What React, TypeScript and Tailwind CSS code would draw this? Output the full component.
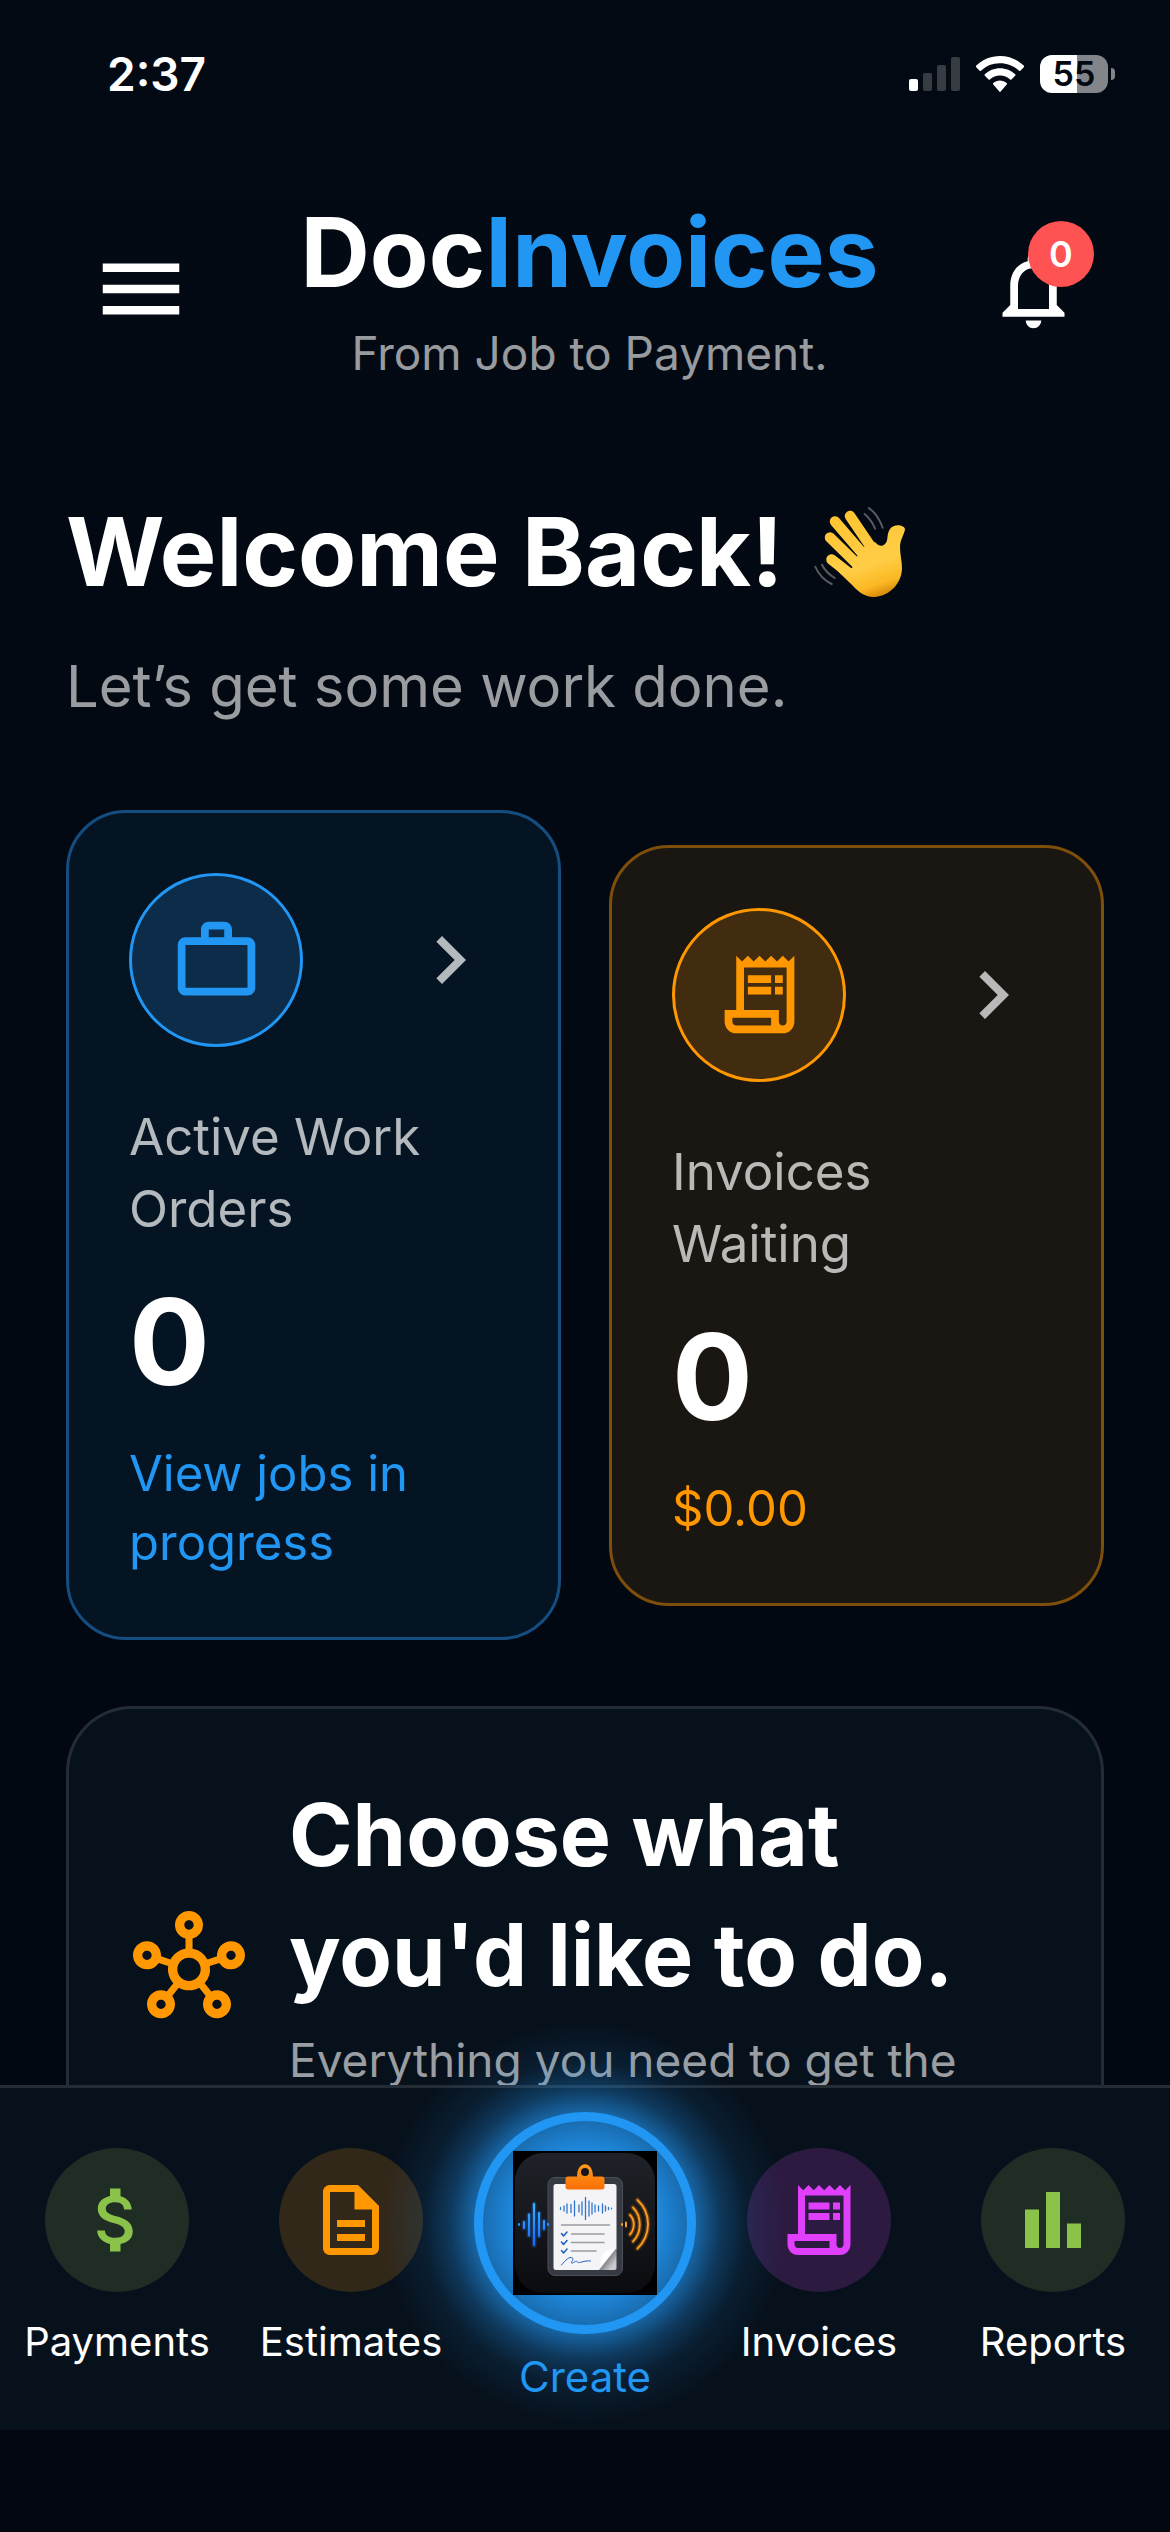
import type { ReactNode } from "react";
import {
  MdBarChart,
  MdAttachMoney,
  MdChevronRight,
  MdMenu,
  MdNotificationsNone,
  MdOutlineDescription,
  MdOutlineHub,
  MdOutlineReceiptLong,
  MdWorkOutline,
} from "react-icons/md";

interface StatCardProps {
  icon: ReactNode;
  label: string;
  count: number;
  detail: string;
  cardClass: string;
  iconClass: string;
  detailClass: string;
}

interface NavItemProps {
  icon: ReactNode;
  label: string;
  iconClass: string;
}

function StatusBar() {
  return (
    <div className="flex items-center justify-between pl-[107px] pr-[55px] pt-[54px]">
      <span className="text-[46px] font-semibold leading-10">2:37</span>
      <div className="flex items-center gap-4">
        <svg className="h-9 w-[51px]" viewBox="0 0 51 36" aria-hidden="true">
          <rect x="0" y="23" width="9" height="12" rx="2" fill="#fff" />
          <rect x="14" y="17" width="9" height="18" rx="2" fill="#373b42" />
          <rect x="28" y="9" width="9" height="26" rx="2" fill="#373b42" />
          <rect x="42" y="1" width="9" height="34" rx="2" fill="#373b42" />
        </svg>
        <svg className="h-9 w-12" viewBox="0 0 48 36" fill="#fff" aria-hidden="true">
          <path d="M24 0C14.700 0 6.200 3.700 0 9.800a1 1 0 0 0 0 1.300l3.600 3.600a1 1 0 0 0 1.300 0A27.500 27.500 0 0 1 24 7.300c7.400 0 14.100 2.800 19.100 7.400a1 1 0 0 0 1.300 0L48 11.100a1 1 0 0 0 0-1.300C41.800 3.700 33.300 0 24 0Z" />
          <path d="M24 12.300c-5.900 0-11.200 2.300-15.200 6a1 1 0 0 0 0 1.400l3.800 3.700a1 1 0 0 0 1.300 0 14.800 14.800 0 0 1 20.200 0 1 1 0 0 0 1.300 0l3.800-3.700a1 1 0 0 0 0-1.400c-4-3.700-9.300-6-15.200-6Z" />
          <path d="M24 24.600c-2.600 0-4.900.9-6.700 2.500a1 1 0 0 0 0 1.400l6 7.100a1 1 0 0 0 1.400 0l6-7.100a1 1 0 0 0 0-1.400 10 10 0 0 0-6.700-2.500Z" />
        </svg>
        <div className="flex items-center gap-[3px]">
          <div className="flex h-[38px] w-[68px] items-center justify-center rounded-xl bg-linear-to-r from-white from-54% to-[#828589] to-54% text-[34px] font-semibold leading-none text-[#030912]">
            55
          </div>
          <div className="h-3 w-1 rounded-r-full bg-[#828589]" />
        </div>
      </div>
    </div>
  );
}

function WavingHand() {
  return (
    <svg className="size-[98px]" viewBox="8 8 98 98" role="img" aria-label="Waving hand">
      <defs>
        <linearGradient id="hand" gradientUnits="userSpaceOnUse" x1="50" y1="20" x2="78" y2="102">
          <stop offset="0" stopColor="#ffc533" />
          <stop offset="0.6" stopColor="#ffcd46" />
          <stop offset="0.85" stopColor="#fbb823" />
          <stop offset="1" stopColor="#d48407" />
        </linearGradient>
      </defs>
      <g stroke="url(#hand)" strokeWidth="10.500" strokeLinecap="round" fill="none">
        <path d="M47 21L68 52" />
        <path d="M32 26.500L60 59" />
        <path d="M27 42.500L54 69" />
        <path d="M28.500 64.500L56 86" />
      </g>
      <path
        d="M62 51L72 47C75 51 79 52 82 49C86 45 83 40 87 34C91 28 102 30 102 34.500C101 40 97 45 97 52C97 60 99 66 99 73C99 87 88 101 71 102C60 102 54 95 47 88L33 74.500L49 73L54 61.500Z"
        fill="url(#hand)"
      />
      <g stroke="#5b5c60" strokeWidth="2" fill="none">
        <path d="M65 12.500C72 17 77 25 80 33.500M61 18.500c5 4 9 9.500 11.500 16" />
        <path d="M12 71c3 7.500 9 14.500 17.500 18.500M18.500 69c3 6 8 11 14 14.500" />
      </g>
    </svg>
  );
}

function StatCard({ icon, label, count, detail, cardClass, iconClass, detailClass }: StatCardProps) {
  return (
    <a href="#" className={`flex-1 rounded-[60px] border-[3px] p-[60px] ${cardClass}`}>
      <div className="flex items-center justify-between">
        <div className={`flex size-[174px] items-center justify-center rounded-full border-[3px] ${iconClass}`}>
          {icon}
        </div>
        <MdChevronRight className="size-24 text-white/70" />
      </div>
      <div className="mt-[54px] text-[51px] leading-[72px] text-white/70">{label}</div>
      <div className="my-[37px] text-[120px] font-bold leading-[120px]">{count}</div>
      <div className={`text-[49px] leading-[69px] ${detailClass}`}>{detail}</div>
    </a>
  );
}

function NavItem({ icon, label, iconClass }: NavItemProps) {
  return (
    <a href="#" className="flex flex-1 flex-col items-center pt-[60px]">
      <div className={`flex size-36 items-center justify-center rounded-full ${iconClass}`}>{icon}</div>
      <span className="mt-6 text-[40px] leading-[51px]">{label}</span>
    </a>
  );
}

function AppLogo() {
  return (
    <svg className="relative size-36" viewBox="0 0 144 144" aria-hidden="true">
      <defs>
        <linearGradient id="tile" x1="0" y1="0" x2="0" y2="1">
          <stop offset="0" stopColor="#1f2228" />
          <stop offset="1" stopColor="#0b0c10" />
        </linearGradient>
        <linearGradient id="clip" x1="0" y1="0" x2="0" y2="1">
          <stop offset="0" stopColor="#ff9a1f" />
          <stop offset="1" stopColor="#f96f05" />
        </linearGradient>
        <linearGradient id="curl" x1="0" y1="0" x2="1" y2="1">
          <stop offset="0.3" stopColor="#55575c" />
          <stop offset="0.8" stopColor="#c9cacd" />
        </linearGradient>
        <linearGradient id="wave" gradientUnits="userSpaceOnUse" x1="0" y1="52" x2="0" y2="95">
          <stop offset="0" stopColor="#35b6ff" />
          <stop offset="1" stopColor="#1666ff" />
        </linearGradient>
      </defs>
      <rect width="144" height="144" fill="#000" />
      <rect x="2" y="2" width="140" height="140" rx="28" fill="url(#tile)" />
      <rect x="35" y="26.500" width="74.500" height="98" rx="7" fill="#363a42" stroke="#4b4f58" />
      <path d="M43 33H101a2.500 2.500 0 0 1 2.500 2.500V98L87 119H43a2.500 2.500 0 0 1-2.500-2.500V35.500A2.500 2.500 0 0 1 43 33Z" fill="#f4f4f6" />
      <path d="M103.500 97V117a2 2 0 0 1-2 2H86Z" fill="url(#curl)" />
      <path d="M103.500 96L85 119c4-4 2-13 6-17s9-2 12.500-6Z" fill="#fff" />
      <path d="M55 25.500h9C64 9 80 9 80 25.500h9a2.500 2.500 0 0 1 2.500 2.500v8a2.500 2.500 0 0 1-2.500 2.500H55a2.500 2.500 0 0 1-2.500-2.500v-8a2.500 2.500 0 0 1 2.500-2.500Z" fill="url(#clip)" />
      <circle cx="72" cy="21" r="4" fill="#14161b" />
      <g stroke="#2f73cf" strokeWidth="1.300" strokeLinecap="round">
        <path d="M47.500 56.500v2M51 55v5M54 53v9M58 53.500v8M61.500 50v15M66 54v7M69 51v13M72.500 46.500v22M76 50v15M79 52v11M82 54v7M85.500 55v5M89.500 53v9M92.500 55v5M95.500 56.500v2M98.500 57.200v.6" />
      </g>
      <g stroke="#9a9ca3" strokeWidth="1.500" strokeLinecap="round">
        <path d="M48.500 74H96.500M58.500 83H91M58.500 91.500H91M58.500 100H83" />
      </g>
      <g stroke="#1f62c4" strokeWidth="1.600" fill="none" strokeLinecap="round" strokeLinejoin="round">
        <path d="M48.500 82.500l2 2.500 3.500-4M48.500 91l2 2.500 3.500-4M48.500 99.500l2 2.500 3.500-4" />
        <path d="M48.500 114c4-5 8-9 11-7 2 1-3 6 0 5s3-3 5-1 6-2 13-1" strokeWidth="1" />
      </g>
      <g stroke="#1e7bff" strokeOpacity="0.25" strokeWidth="5" strokeLinecap="round">
        <path d="M11 71v6M16 63.500v21M21 53v41M26 62v23M31 70v8" />
      </g>
      <g stroke="url(#wave)" strokeWidth="2.200" strokeLinecap="round">
        <path d="M6 73v1M11 71v6M16 63.500v21M21 53v41M26 62v23M31 70v8M35 73v1" />
      </g>
      <g stroke="#ff8a00" strokeOpacity="0.25" strokeWidth="5" fill="none" strokeLinecap="round">
        <path d="M117 64c5 5 5 14 0 19.500M120 56.500c9 9 9 25 0 34M124.500 49c14 13 14 35 0 48.500" />
      </g>
      <g stroke="#fb9a1c" strokeWidth="2" fill="none" strokeLinecap="round">
        <path d="M109 73v1M113 71.500v4M117 64c5 5 5 14 0 19.500M120 56.500c9 9 9 25 0 34M124.500 49c14 13 14 35 0 48.500" />
      </g>
    </svg>
  );
}

function CreateButton() {
  return (
    <a href="#" className="flex flex-1 flex-col items-center pt-6 text-[#2196f3]">
      <div className="relative flex size-[222px] items-center justify-center">
        <div className="absolute -inset-[90px] rounded-full bg-[radial-gradient(closest-side,#2196f3f2_0%,#2196f3e6_36%,#2196f3b3_50%,#2196f399_56%,#2196f34d_67%,#2196f31a_80%,#2196f300_100%)]" />
        <div className="absolute inset-0 rounded-full border-[9px] border-[#2196f3]" />
        <AppLogo />
      </div>
      <span className="relative mt-4 text-[42px] leading-[54px]">Create</span>
    </a>
  );
}

export default function App() {
  return (
    <div className="flex h-screen flex-col overflow-hidden bg-linear-to-b from-[#030a13] to-[#020710] font-[Inter,sans-serif] text-white">
      <StatusBar />

      <header className="flex items-center justify-between px-[90px] pt-[98px]">
        <button type="button" aria-label="Open menu">
          <MdMenu className="size-[102px]" />
        </button>
        <div className="text-center">
          <h1 className="text-[96px] font-bold leading-[120px]">
            Doc<span className="text-[#2196f3]">Invoices</span>
          </h1>
          <p className="mt-2 text-[46px] leading-[66px] text-white/60">From Job to Payment.</p>
        </div>
        <button type="button" aria-label="Notifications" className="relative">
          <MdNotificationsNone className="size-[93px]" />
          <span className="absolute -right-[14px] -top-[22px] flex size-[66px] items-center justify-center rounded-full bg-[#ff5252] text-[36px] font-semibold">
            0
          </span>
        </button>
      </header>

      <main className="min-h-0 flex-1 overflow-hidden px-[66px] pt-[106px]">
        <h2 className="flex items-center gap-7 text-[95px] font-bold leading-[120px]">
          Welcome Back! <WavingHand />
        </h2>
        <p className="mt-8 text-[58px] leading-[84px] text-white/60">Let’s get some work done.</p>

        <div className="mt-[82px] flex items-center gap-12">
          <StatCard
            icon={<MdWorkOutline className="size-[93px]" />}
            label="Active Work Orders"
            count={0}
            detail="View jobs in progress"
            cardClass="border-[#144d7f] bg-[#051423]"
            iconClass="border-[#2196f3] bg-[#0c2c4a] text-[#2196f3]"
            detailClass="text-[#2196f3]"
          />
          <StatCard
            icon={<MdOutlineReceiptLong className="size-[93px]" />}
            label="Invoices Waiting"
            count={0}
            detail="$0.00"
            cardClass="border-[#7e4e0b] bg-[#1a1611]"
            iconClass="border-[#ff9800] bg-[#422c0f] text-[#ff9800]"
            detailClass="text-[#ff9800]"
          />
        </div>

        <section className="mt-[66px] flex items-center gap-9 rounded-t-[66px] border-[3px] border-b-0 border-[#242c36] bg-[#07111c] px-16 pt-[66px]">
          <MdOutlineHub className="size-28 shrink-0 text-[#ff9800]" />
          <div className="pb-[66px] pl-2">
            <h3 className="text-[86px] font-bold leading-[120px]">Choose what you'd like to do.</h3>
            <p className="mt-3 text-[46px] leading-[66px] text-white/60">Everything you need to get the</p>
          </div>
        </section>
      </main>

      <nav className="relative mb-[102px] flex h-[345px] border-t-[3px] border-[#242c36] bg-[#07111c]">
        <NavItem
          icon={<MdAttachMoney className="size-[84px]" />}
          label="Payments"
          iconClass="bg-[#1f2d25] text-[#8bc34a]"
        />
        <NavItem
          icon={<MdOutlineDescription className="size-[84px]" />}
          label="Estimates"
          iconClass="bg-[#32281a] text-[#ff9800]"
        />
        <CreateButton />
        <NavItem
          icon={<MdOutlineReceiptLong className="size-[84px]" />}
          label="Invoices"
          iconClass="bg-[#2c1a40] text-[#e040fb]"
        />
        <NavItem
          icon={<MdBarChart className="size-[84px]" />}
          label="Reports"
          iconClass="bg-[#1f2d25] text-[#8bc34a]"
        />
      </nav>
    </div>
  );
}
